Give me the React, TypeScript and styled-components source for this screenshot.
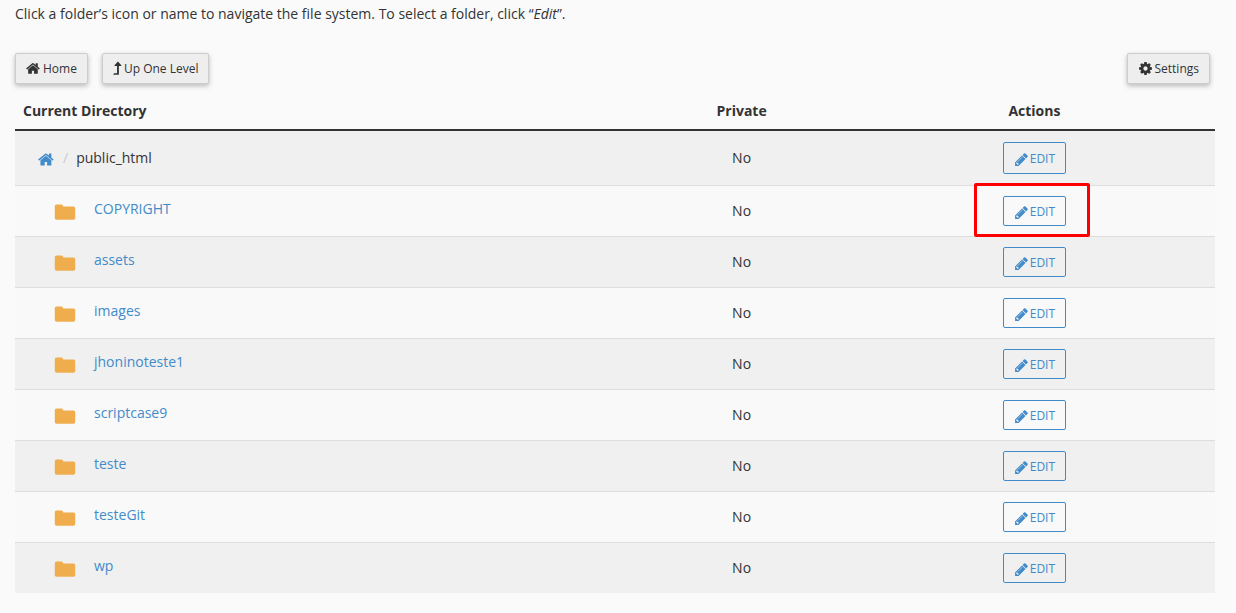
import React from "react";
import styled, { createGlobalStyle } from "styled-components";

const GlobalStyle = createGlobalStyle`
  * { box-sizing: border-box; }
  body {
    margin: 0;
    background: #fafafa;
    color: #333;
    font-family: "Open Sans", sans-serif;
    font-size: 14px;
    line-height: 20px;
  }
`;

const iconPaths = {
  home: "M1408 992v480q0 26-19 45t-45 19h-384v-384h-256v384h-384q-26 0-45-19t-19-45v-480q0-1 .5-3t.5-3l575-474 575 474q1 2 1 6zm223-69l-62 74q-8 9-21 11h-3q-13 0-21-7l-692-577-692 577q-12 8-24 7-13-2-21-11l-62-74q-8-10-7-23.5t11-21.5l719-599q32-26 76-26t76 26l244 204v-195q0-14 9-23t23-9h192q14 0 23 9t9 23v408l219 182q10 8 11 21.5t-7 23.5z",
  pencil: "M491 1536l91-91-235-235-91 91v107h128v128h107zm523-928q0-22-22-22-10 0-17 7l-542 542q-7 7-7 17 0 22 22 22 10 0 17-7l542-542q7-7 7-17zm-54-192l416 416-832 832h-416v-416zm683 96q0 53-37 90l-166 166-416-416 166-165q36-38 90-38 53 0 91 38l235 234q37 39 37 91z",
  folder: "M1728 640v754q0 142-142 142h-1380q-142 0-142-142v-972q0-134 142-134h390q110 0 142 110l24 60h824q142 0 142 142z",
  cog: "M1152 896q0-106-75-181t-181-75-181 75-75 181 75 181 181 75 181-75 75-181zm512-109v222q0 12-8 23t-20 13l-185 28q-19 54-39 91 35 50 107 138 10 12 10 25t-9 23q-27 37-99 108t-94 71q-12 0-26-9l-138-108q-44 23-91 38-16 136-29 186-7 28-36 28h-222q-14 0-24.5-8.5t-11.5-21.5l-28-184q-49-16-90-37l-141 107q-10 9-25 9-14 0-25-11-126-114-165-168-7-10-7-23 0-12 8-23 15-21 51-66.5t54-70.5q-27-50-41-99l-183-27q-13-2-21-12.5t-8-23.5v-222q0-12 8-23t19-13l186-28q14-46 39-92-40-57-107-138-10-12-10-24 0-10 9-23 26-36 98.5-107.5t94.5-71.5q13 0 26 10l138 107q44-23 91-38 16-136 29-186 7-28 36-28h222q14 0 24.5 8.5t11.5 21.5l28 184q49 16 90 37l142-107q9-9 24-9 13 0 25 10 129 119 165 170 7 8 7 22 0 12-8 23-15 21-51 66.5t-54 70.5q26 50 41 98l183 28q13 2 21 12.5t8 23.5z",
  levelUp: "M480 1640h520q60 0 60-60V600h250q46 0 54-34t-18-64L980 90q-34-36-68 0L546 502q-26 30-18 64t54 34h258v870H500q-20 0-30 16l-76 96q-14 20-6 40t32 18z",
};

const Icon = ({ name }: { name: keyof typeof iconPaths }) => (
  <svg viewBox="0 0 1792 1792" fill="currentColor" aria-hidden="true">
    <path d={iconPaths[name]} />
  </svg>
);

const Page = styled.main`
  padding: 4px 21px 20px 15px;
`;

const Intro = styled.p`
  margin: 0;
`;

const Toolbar = styled.div`
  display: flex;
  gap: 14px;
  margin-top: 29px;
  padding-right: 5px;
`;

const ToolButton = styled.button<{ $end?: boolean; $narrowIcon?: boolean }>`
  display: flex;
  align-items: center;
  gap: 2px;
  height: 31px;
  margin-left: ${(p) => (p.$end ? "auto" : "0")};
  padding: 0 10px;
  border: 1px solid #ccc;
  border-radius: 2px;
  background: #eee;
  color: #333;
  box-shadow: 0 2px 5px rgba(0, 0, 0, 0.26);
  font: 12px/18px "Open Sans", sans-serif;

  svg {
    width: 15px;
    height: 15px;
    margin: 0 ${(p) => (p.$narrowIcon ? "-3px" : "0")};
  }
`;

const Table = styled.table`
  width: 100%;
  margin-top: 7px;
  border-collapse: separate;
  border-spacing: 0;
  table-layout: fixed;
`;

const HeadCell = styled.th<{ $width: string; $align?: string }>`
  width: ${(p) => p.$width};
  padding: 10px 8px 8px;
  border-bottom: 2px solid #333;
  text-align: ${(p) => p.$align ?? "center"};
`;

const Row = styled.tr<{ $current?: boolean }>`
  background: #f9f9f9;

  &:nth-child(odd) {
    background: #f0f0f0;
  }

  td {
    height: ${(p) => (p.$current ? "54px" : "51px")};
    padding: 0 8px;
    border-top: ${(p) => (p.$current ? "0" : "1px solid #ddd")};
    text-align: center;
  }
`;

const Link = styled.a`
  color: #428bca;
  text-decoration: none;
`;

const Breadcrumb = styled.nav`
  display: flex;
  align-items: center;
  padding-left: 15px;

  svg {
    display: block;
    width: 17px;
    height: 17px;
    margin-top: 3px;
  }
`;

const Separator = styled.span`
  padding: 0 8px;
  color: #ccc;
`;

const FolderEntry = styled.div`
  display: flex;
  align-items: center;
  gap: 18px;
  padding: 0 0 4px 31px;
`;

const FolderLink = styled(Link)`
  &:has(svg) {
    color: #f0ad4e;
  }

  svg {
    display: block;
    width: 22px;
    height: 22px;
    margin-top: 6px;
  }
`;

const EditFrame = styled.div`
  position: relative;
  display: inline-block;
  vertical-align: middle;
`;

const EditButton = styled.button<{ $tall?: boolean }>`
  display: flex;
  align-items: center;
  justify-content: center;
  gap: 1px;
  width: 63px;
  height: ${(p) => (p.$tall ? "32px" : "30px")};
  padding: 2px 0 0;
  border: 1px solid #428bca;
  border-radius: 2px;
  background: transparent;
  color: #428bca;
  font: 12px/18px "Open Sans", sans-serif;

  svg {
    width: 15px;
    height: 15px;
  }
`;

const Highlight = styled.span`
  position: absolute;
  inset: -13px -24px -11px -29px;
  border: 3px solid #f00;
  border-radius: 2px;
  pointer-events: none;
`;

const folders = ["COPYRIGHT", "assets", "images", "jhoninoteste1", "scriptcase9", "teste", "testeGit", "wp"];

export default function App() {
  return (
    <Page>
      <GlobalStyle />
      <Intro>
        Click a folder’s icon or name to navigate the file system. To select a folder, click “<em>Edit</em>”.
      </Intro>
      <Toolbar>
        <ToolButton><Icon name="home" />Home</ToolButton>
        <ToolButton $narrowIcon><Icon name="levelUp" />Up One Level</ToolButton>
        <ToolButton $end><Icon name="cog" />Settings</ToolButton>
      </Toolbar>
      <Table>
        <thead>
          <tr>
            <HeadCell $width="51.2%" $align="left">Current Directory</HeadCell>
            <HeadCell $width="18.7%">Private</HeadCell>
            <HeadCell $width="30.1%">Actions</HeadCell>
          </tr>
        </thead>
        <tbody>
          <Row $current>
            <td>
              <Breadcrumb aria-label="Current path">
                <Link href="#home" aria-label="Home"><Icon name="home" /></Link>
                <Separator>/</Separator>
                <span>public_html</span>
              </Breadcrumb>
            </td>
            <td>No</td>
            <td><EditFrame><EditButton $tall><Icon name="pencil" />EDIT</EditButton></EditFrame></td>
          </Row>
          {folders.map((name) => (
            <Row key={name}>
              <td>
                <FolderEntry>
                  <FolderLink href={`#${name}`} aria-label={`Open ${name}`}><Icon name="folder" /></FolderLink>
                  <FolderLink href={`#${name}`}>{name}</FolderLink>
                </FolderEntry>
              </td>
              <td>No</td>
              <td>
                <EditFrame>
                  <EditButton><Icon name="pencil" />EDIT</EditButton>
                  {name === "COPYRIGHT" && <Highlight />}
                </EditFrame>
              </td>
            </Row>
          ))}
        </tbody>
      </Table>
    </Page>
  );
}
